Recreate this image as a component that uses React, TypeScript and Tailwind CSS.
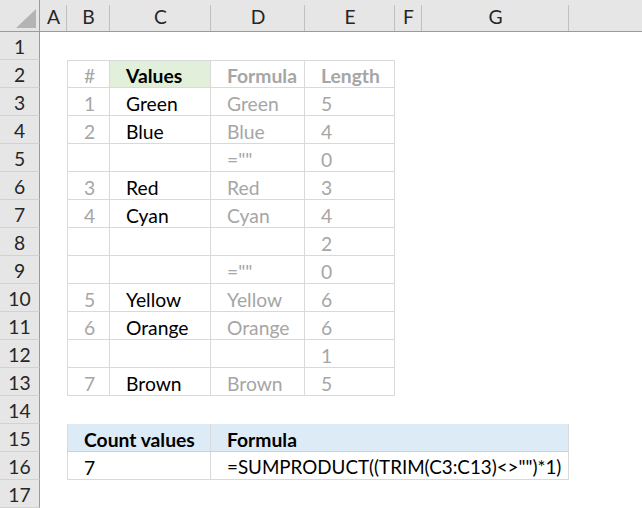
const font = { fontFamily: "Lato, 'Liberation Sans', sans-serif" };

const cols = ["A", "B", "C", "D", "E", "F", "G", ""];

type Row = { n: string; v: string; f: string; l: string };

const data: Row[] = [
  { n: "1", v: "Green", f: "Green", l: "5" },
  { n: "2", v: "Blue", f: "Blue", l: "4" },
  { n: "", v: "", f: '=""', l: "0" },
  { n: "3", v: "Red", f: "Red", l: "3" },
  { n: "4", v: "Cyan", f: "Cyan", l: "4" },
  { n: "", v: "", f: "", l: "2" },
  { n: "", v: "", f: '=""', l: "0" },
  { n: "5", v: "Yellow", f: "Yellow", l: "6" },
  { n: "6", v: "Orange", f: "Orange", l: "6" },
  { n: "", v: "", f: "", l: "1" },
  { n: "7", v: "Brown", f: "Brown", l: "5" },
];

const RowHead = ({ n }: { n: number }) => (
  <div className="flex items-center justify-center bg-[#e6e6e6] border-r border-r-[#9b9b9b] border-b border-b-[#d2d2d2] text-[#262626] pt-[2px]">
    {n}
  </div>
);

const Cell = ({
  children,
  className = "",
}: {
  children?: React.ReactNode;
  className?: string;
}) => (
  <div
    className={`flex items-center pl-[16px] pt-[4px] whitespace-nowrap border-r border-b border-[#d9d9d9] ${className}`}
  >
    {children}
  </div>
);

const Empty = () => <div />;

export default function App() {
  return (
    <div
      style={font}
      className="w-[642px] h-[508px] bg-white overflow-hidden text-[19.3px] leading-none grid grid-cols-[40px_27px_43px_101px_94px_90px_27px_147px_73px] grid-rows-[32px_repeat(17,28px)]"
    >
      {/* column headers */}
      <div className="relative bg-[#e6e6e6] border-r border-r-[#9b9b9b] border-b border-b-[#9b9b9b]">
        <svg className="absolute left-0 top-0" width="40" height="32">
          <polygon points="16,28 36,28 36,9" fill="#b4b4b4" />
        </svg>
      </div>
      {cols.map((c, i) => (
        <div
          key={i}
          className="flex items-center justify-center bg-[#e6e6e6] border-b border-b-[#9b9b9b] text-[#262626] pt-[3px] relative"
        >
          {c}
          {i < 7 && (
            <span className="absolute right-0 top-[5px] bottom-0 w-px bg-[#c0c0c0]" />
          )}
        </div>
      ))}

      {/* row 1 */}
      <RowHead n={1} />
      <div className="col-span-8" />

      {/* row 2 header */}
      <RowHead n={2} />
      <Empty />
      <Cell className="border-l border-t text-[#a6a6a6]">#</Cell>
      <Cell className="border-t bg-[#e2efda] font-bold text-black">Values</Cell>
      <Cell className="border-t font-bold text-[#a6a6a6]">Formula</Cell>
      <Cell className="border-t font-bold text-[#a6a6a6]">Length</Cell>
      <div className="col-span-3" />

      {data.map((r, i) => (
        <div key={i} className="contents">
          <RowHead n={i + 3} />
          <Empty />
          <Cell className="border-l text-[#a6a6a6]">{r.n}</Cell>
          <Cell className="text-black">{r.v}</Cell>
          <Cell className="text-[#a6a6a6]">{r.f}</Cell>
          <Cell className="text-[#a6a6a6]">{r.l}</Cell>
          <div className="col-span-3" />
        </div>
      ))}

      {/* row 14 */}
      <RowHead n={14} />
      <div className="col-span-8" />

      {/* row 15 */}
      <RowHead n={15} />
      <Empty />
      <Cell className="col-span-2 border-l bg-[#ddebf7] border-b-[#d0d0d0] font-bold text-black">
        Count values
      </Cell>
      <Cell className="col-span-4 bg-[#ddebf7] border-b-[#d0d0d0] font-bold text-black">
        Formula
      </Cell>
      <Empty />

      {/* row 16 */}
      <RowHead n={16} />
      <Empty />
      <Cell className="col-span-2 border-l text-black">7</Cell>
      <Cell className="col-span-4 text-black text-[18.8px]">
        =SUMPRODUCT((TRIM(C3:C13)&lt;&gt;"")*1)
      </Cell>
      <Empty />

      {/* row 17 */}
      <RowHead n={17} />
      <div className="col-span-8" />
    </div>
  );
}
